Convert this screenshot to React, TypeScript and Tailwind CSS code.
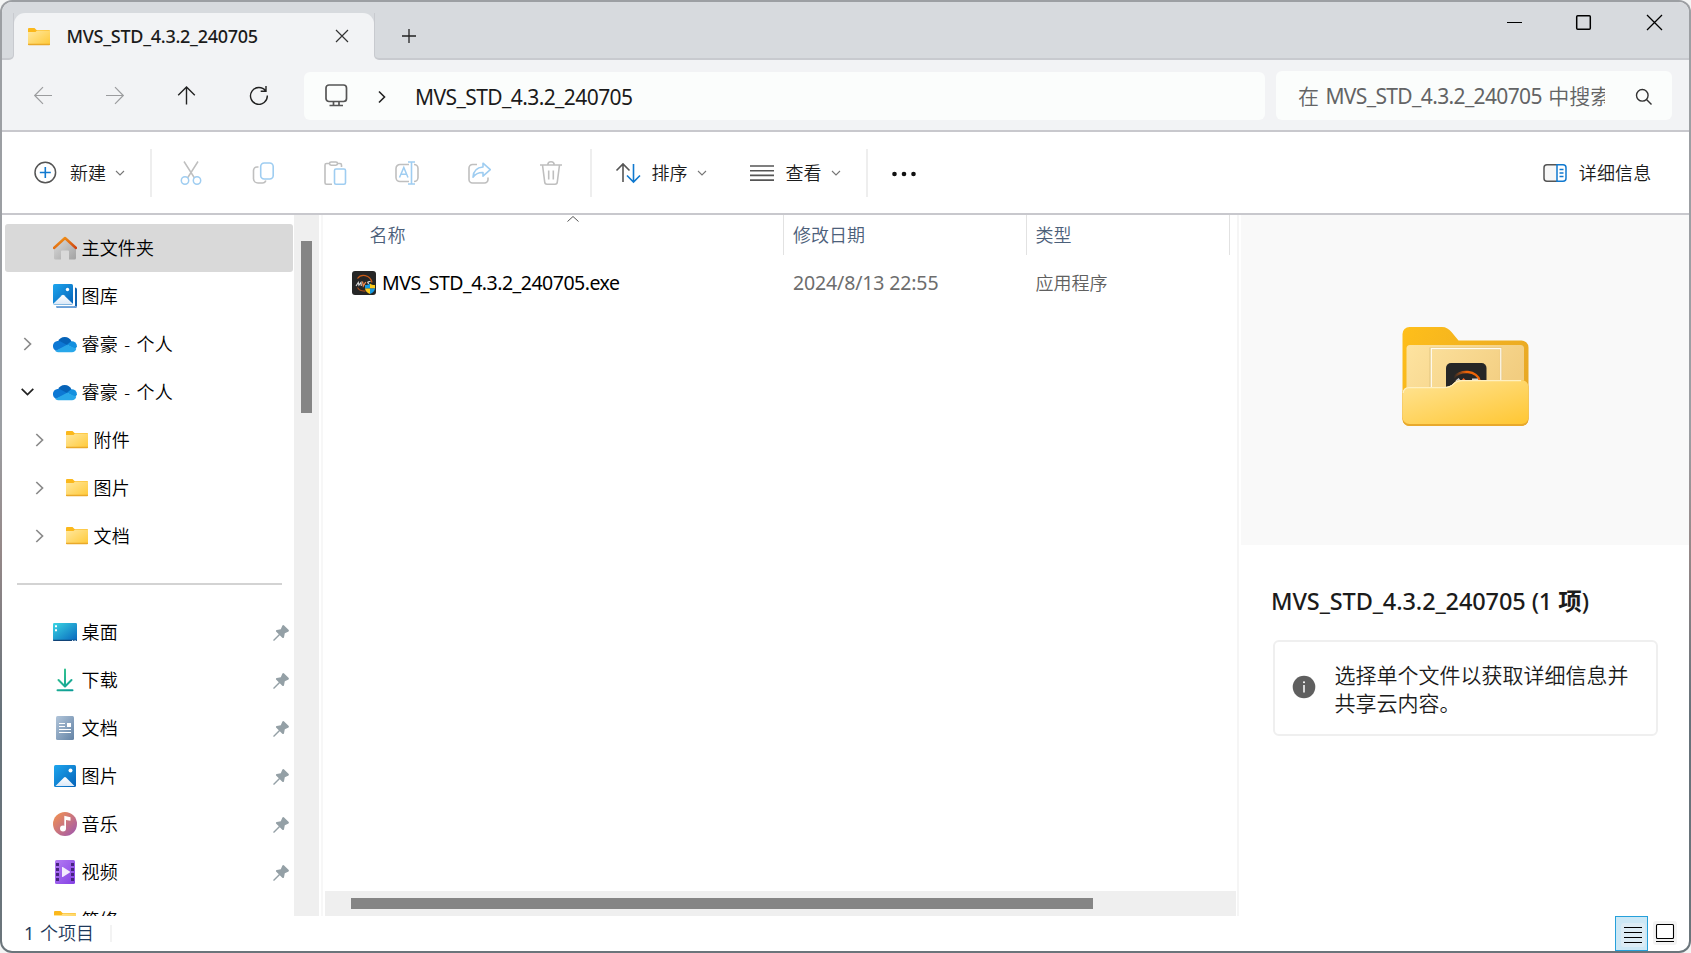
import type { ReactNode } from "react";

function FolderIcon() {
  return (
    <svg width="24" height="24" viewBox="0 0 24 24" className="shrink-0">
      <defs>
        <linearGradient id="fold" x1="0" y1="0" x2="1" y2="1">
          <stop offset="0" stopColor="#ffe8a0" />
          <stop offset="1" stopColor="#ffc937" />
        </linearGradient>
      </defs>
      <path d="M1 4a1 1 0 0 1 1-1h5.500l2 2H22a1 1 0 0 1 1 1v2H1z" fill="#fbb81c" />
      <path d="M1 7h7.500l1.500-1.500H23V20H1z" fill="url(#fold)" />
      <path d="M1 18.800h22v.7a.8.8 0 0 1-.8.8H1.800a.8.800 0 0 1-.8-.8z" fill="#e9a92a" />
    </svg>
  );
}

function HomeIcon() {
  return (
    <svg width="24" height="24" viewBox="0 0 24 24" className="shrink-0">
      <defs>
        <linearGradient id="homeWall" x1="0" y1="0" x2="1" y2="1">
          <stop offset="0" stopColor="#dcdcdc" />
          <stop offset="1" stopColor="#a2a2a2" />
        </linearGradient>
        <linearGradient id="homeRoof" x1="0" y1="0" x2="1" y2="1">
          <stop offset="0" stopColor="#f6a01a" />
          <stop offset="1" stopColor="#cf4310" />
        </linearGradient>
      </defs>
      <path d="M1 11.500 12 2l11 9.500V22a1.500 1.500 0 0 1-1.500 1.500H16V15.500a1 1 0 0 0-1-1H9a1 1 0 0 0-1 1v8H2.500A1.500 1.500 0 0 1 1 22z" fill="url(#homeWall)" />
      <path d="M1 12 12 2l11 10" fill="none" stroke="url(#homeRoof)" strokeWidth="2.500" strokeLinecap="round" strokeLinejoin="round" />
    </svg>
  );
}

function BlueDefs({ id }: { id: string }) {
  return (
    <defs>
      <linearGradient id={id} x1="0" y1="0" x2="1" y2="1">
        <stop offset="0" stopColor="#1ea6ee" />
        <stop offset="1" stopColor="#0562b8" />
      </linearGradient>
      <linearGradient id={id + "m"} x1="0" y1="0" x2="0" y2="1">
        <stop offset="0" stopColor="#ffffff" />
        <stop offset="1" stopColor="#dbe9f8" />
      </linearGradient>
    </defs>
  );
}

function GalleryIcon() {
  return (
    <svg width="24" height="24" viewBox="0 0 24 24" className="shrink-0">
      <BlueDefs id="gal" />
      <path d="M22 3.500a2 2 0 0 1 2 2V22a2 2 0 0 1-2 2H5a2 2 0 0 1-2-1.500h18a1 1 0 0 0 1-1z" fill="#0f62b0" />
      <path d="M3 22.500h18a1 1 0 0 0 .8-.5L24 22a2 2 0 0 1-2 2H5a2 2 0 0 1-2-1.500" fill="#6ba0da" />
      <rect width="20" height="20.500" rx="1.500" fill="url(#gal)" />
      <path d="M0 20 9 11.300a1.500 1.500 0 0 1 2 0L20 20z" fill="url(#galm)" />
      <circle cx="14.500" cy="5.500" r="1.700" fill="#fff" />
    </svg>
  );
}

function PicturesIcon() {
  return (
    <svg width="24" height="24" viewBox="0 0 24 24" className="shrink-0">
      <BlueDefs id="pic" />
      <rect x="1" y="1" width="22" height="22" rx="1.500" fill="url(#pic)" />
      <path d="M2.500 22 11 13.500a1.400 1.400 0 0 1 2 0L21.500 22z" fill="url(#picm)" />
      <circle cx="17.500" cy="6.500" r="2" fill="#fff" />
    </svg>
  );
}

function CloudIcon() {
  return (
    <svg width="24" height="24" viewBox="0 0 24 24" className="shrink-0">
      <path d="M5 9.500a7.300 7.300 0 0 1 13.500 0l-4 5z" fill="#0663b8" />
      <path d="M0 15A5.300 5.300 0 0 1 7 9.200l8 4.300L3 19a4.800 4.800 0 0 1-3-4" fill="#0d78d4" />
      <path d="M14 12.800 18.300 9.200A5.300 5.300 0 0 1 24 14.500l-2 3z" fill="#1490df" />
      <path d="M2.300 19 14 12.800l9.300 4a4.700 4.700 0 0 1-4.300 3.400H5.500A5 5 0 0 1 2.300 19" fill="#28a7ea" />
    </svg>
  );
}

function DesktopIcon() {
  return (
    <svg width="24" height="24" viewBox="0 0 24 24" className="shrink-0">
      <defs>
        <linearGradient id="desk" x1="0" y1="0" x2="1" y2="1">
          <stop offset="0" stopColor="#3ad5e3" />
          <stop offset="1" stopColor="#0765bd" />
        </linearGradient>
      </defs>
      <rect y="3" width="24" height="18" rx="1.200" fill="url(#desk)" />
      <path d="M0 19.700h24v.3a1 1 0 0 1-1 1H1a1 1 0 0 1-1-1z" fill="#114377" />
      <path d="M2 5.200h2v2H2zM2 9.200h2v2H2z" fill="#fff" />
      <path d="M19 20h1.200v1H19zM21.500 20h1.200v1h-1.200z" fill="#cfe3f5" />
    </svg>
  );
}

function DownloadIcon() {
  return (
    <svg width="24" height="24" viewBox="0 0 24 24" className="shrink-0">
      <defs>
        <linearGradient id="down" gradientUnits="userSpaceOnUse" x1="4" y1="1" x2="20" y2="23">
          <stop offset="0" stopColor="#3dcb90" />
          <stop offset="1" stopColor="#089a96" />
        </linearGradient>
      </defs>
      <path d="M12 1.500v16.500M5.500 12l6.500 6.500 6.500-6.500M4.500 22.300h15" fill="none" stroke="url(#down)" strokeWidth="2" strokeLinecap="round" strokeLinejoin="round" />
    </svg>
  );
}

function DocumentIcon() {
  return (
    <svg width="24" height="24" viewBox="0 0 24 24" className="shrink-0">
      <defs>
        <linearGradient id="doc" x1="0" y1="0" x2="1" y2="1">
          <stop offset="0" stopColor="#b1c5da" />
          <stop offset="1" stopColor="#6483a5" />
        </linearGradient>
      </defs>
      <rect x="3" width="18" height="24" rx="1.500" fill="url(#doc)" />
      <path d="M6 7.500h6M6 10.500h6M6 13.500h12M6 16.500h12" stroke="#fff" strokeWidth="1.100" />
      <path d="M14 7h4v4h-4z" fill="#fff" />
    </svg>
  );
}

function MusicIcon() {
  return (
    <svg width="24" height="24" viewBox="0 0 24 24" className="shrink-0">
      <defs>
        <linearGradient id="mus" x1="0.100" y1="0.100" x2="0.900" y2="0.900">
          <stop offset="0" stopColor="#ee8e55" />
          <stop offset="1" stopColor="#a55ba8" />
        </linearGradient>
      </defs>
      <circle cx="12" cy="12" r="12" fill="url(#mus)" />
      <circle cx="10" cy="16.500" r="3" fill="#fff" />
      <path d="M11.300 4.500a.6.600 0 0 1 .8-.6l5.400 1.400v3.400l-4.500-.8v8.600h-1.700z" fill="#fff" />
    </svg>
  );
}

function VideoIcon() {
  return (
    <svg width="24" height="24" viewBox="0 0 24 24" className="shrink-0">
      <defs>
        <linearGradient id="vid" x1="0" y1="0" x2="1" y2="1">
          <stop offset="0" stopColor="#b37bf3" />
          <stop offset="1" stopColor="#8440e4" />
        </linearGradient>
      </defs>
      <rect x="2" width="20" height="24" rx="1.500" fill="url(#vid)" />
      <path d="M3 3h3v3H3zM3 8h3v3H3zM3 13h3v3H3zM3 18h3v3H3zM18 3h3v3h-3zM18 8h3v3h-3zM18 13h3v3h-3zM18 18h3v3h-3z" fill="#472480" />
      <path d="M9 7.500a.5.500 0 0 1 .8-.4l7 4.500a.5.500 0 0 1 0 .8l-7 4.500a.5.500 0 0 1-.8-.4z" fill="#f2eafd" />
    </svg>
  );
}

function PinIcon() {
  return (
    <svg width="16" height="16" viewBox="0 0 16 16" className="shrink-0">
      <path d="M9.400.600a1.300 1.300 0 0 1 1.700-.2l4.400 4.300c.7.800.5 1.700-.4 2L11.800 8.200l-.8 4c-.2.900-1.100 1.100-1.700.5L6.800 10.200 1.300 15.700H.300v-1L5.800 9.200 3.300 6.700c-.7-.7-.4-1.500.5-1.700l4-.8z" fill="#94a0a6" />
    </svg>
  );
}

function Chevron({ open = false }: { open?: boolean }) {
  return open ? (
    <svg width="14" height="14" viewBox="0 0 14 14" className="shrink-0">
      <path d="M.700 3.800 6.500 9.600l5.800-5.800" fill="none" stroke="#222" strokeWidth="1.700" />
    </svg>
  ) : (
    <svg width="14" height="14" viewBox="0 0 14 14" className="shrink-0">
      <path d="M3.300 1l6.200 6-6.200 6" fill="none" stroke="#8a8a8a" strokeWidth="1.700" />
    </svg>
  );
}

function SmallCaret() {
  return (
    <svg width="10" height="8" viewBox="0 0 10 8" className="shrink-0">
      <path d="M1 2l4 4 4-4" fill="none" stroke="#777" strokeWidth="1.100" />
    </svg>
  );
}

function AppIcon() {
  return (
    <svg width="24" height="24" viewBox="0 0 24 24" className="shrink-0">
      <rect width="24" height="24" rx="3" fill="#262626" />
      <path d="M5.500 7.500C9 2.500 18 3.500 20 11.500" fill="none" stroke="#c85a17" strokeWidth="1.300" />
      <path d="M5.500 16.500c1.500 2.500 4.500 3.800 8 3.500" fill="none" stroke="#a84d1a" strokeWidth="1.200" />
      <path d="M4 15l2.300-3.500.6 2.700 2.100-2.700.3 3.500" fill="none" stroke="#d8d8d8" strokeWidth="1.100" />
      <path d="m10.500 10.500.8 4.500 2.500-4" fill="none" stroke="#f08a50" strokeWidth="1.300" />
      <path d="M18.500 10.500c-3-.2-3.700 1.200-1.500 2" fill="none" stroke="#ddd" strokeWidth="1.100" />
      <path d="M18 12.500v5h-5v-3.400c2 0 3.800-.6 5-1.600" fill="#169be0" />
      <path d="M18 12.500c1.200 1 3 1.600 5 1.600v3.400h-5z" fill="#fccb1c" />
      <path d="M13 17.500h5V23c-3-1.200-4.700-3-5-5.500" fill="#fccb1c" />
      <path d="M18 17.500h5c-.3 2.500-2 4.300-5 5.500z" fill="#169be0" />
    </svg>
  );
}

function BigFolder() {
  return (
    <svg width="127" height="99" viewBox="0 0 127 99">
      <defs>
        <linearGradient id="bfBack" x1="0" y1="0" x2="1" y2="0.500">
          <stop offset="0" stopColor="#ffbf1a" />
          <stop offset="1" stopColor="#e8a825" />
        </linearGradient>
        <linearGradient id="bfIn" x1="0" y1="0" x2="1" y2="0.400">
          <stop offset="0" stopColor="#fde3a0" />
          <stop offset="1" stopColor="#f2cd80" />
        </linearGradient>
        <linearGradient id="bfFront" x1="0.100" y1="0" x2="0.900" y2="1">
          <stop offset="0" stopColor="#ffe392" />
          <stop offset="1" stopColor="#ffc837" />
        </linearGradient>
        <linearGradient id="bfArc" x1="0" y1="0" x2="1" y2="0">
          <stop offset="0" stopColor="#262626" />
          <stop offset="0.500" stopColor="#ee6408" />
        </linearGradient>
      </defs>
      <path d="M.500 7a7 7 0 0 1 7-7H40c4 0 7 2 9.500 5l7 8.500h63a7 7 0 0 1 7 7V92a7 7 0 0 1-7 7H7.500a7 7 0 0 1-7-7z" fill="url(#bfBack)" />
      <rect x="4.500" y="18" width="117.500" height="60" rx="3.500" fill="url(#bfIn)" />
      <path d="M28.500 62V21.500h70.500V60" fill="none" stroke="#d9bc78" strokeWidth="2.200" opacity="0.600" />
      <path d="M29.300 62V21.700h69.500V60" fill="none" stroke="#fffdf5" strokeWidth="1.200" />
      <rect x="44" y="36" width="40.500" height="36" rx="5" fill="#262626" />
      <path d="M51.500 51a13.500 9.500 0 0 1 26 2.500" fill="none" stroke="url(#bfArc)" strokeWidth="2.400" />
      <path d="M54 54l2.500-2 1.500 2M70 52.300h6" fill="none" stroke="#cfcfcf" strokeWidth="1.500" />
      <path d="M59.500 53.500 61.500 51l2.500 2.500z" fill="#f4682a" />
      <path d="M.500 66a6 6 0 0 1 6-6H42c5 0 7-1 10-4s5-3 8-3h59.500a7 7 0 0 1 7 7v32a7 7 0 0 1-7 7H7.500a7 7 0 0 1-7-7z" fill="#e8a92d" />
      <path d="M.500 66a6 6 0 0 1 6-6H42c5 0 7-1 10-4s5-3 8-3h59.500a7 7 0 0 1 7 7v30a7 7 0 0 1-7 7H7.500a7 7 0 0 1-7-7z" fill="url(#bfFront)" />
      <path d="M1.200 66a5.500 5.500 0 0 1 5.500-5.400H42c5 0 7-1 10-4s5-3 8-3h59" fill="none" stroke="#fff0c0" strokeWidth="1.200" />
    </svg>
  );
}

type Item = { label: string; icon: ReactNode; chevron?: "open" | "closed"; child?: boolean; active?: boolean };

const tree: Item[] = [
  { label: "主文件夹", icon: <HomeIcon />, active: true },
  { label: "图库", icon: <GalleryIcon /> },
  { label: "睿豪 - 个人", icon: <CloudIcon />, chevron: "closed" },
  { label: "睿豪 - 个人", icon: <CloudIcon />, chevron: "open" },
  { label: "附件", icon: <FolderIcon />, chevron: "closed", child: true },
  { label: "图片", icon: <FolderIcon />, chevron: "closed", child: true },
  { label: "文档", icon: <FolderIcon />, chevron: "closed", child: true },
];

const pinned: Item[] = [
  { label: "桌面", icon: <DesktopIcon /> },
  { label: "下载", icon: <DownloadIcon /> },
  { label: "文档", icon: <DocumentIcon /> },
  { label: "图片", icon: <PicturesIcon /> },
  { label: "音乐", icon: <MusicIcon /> },
  { label: "视频", icon: <VideoIcon /> },
  { label: "简修", icon: <FolderIcon /> },
];

function TreeRow({ item, pin }: { item: Item; pin?: boolean }) {
  return (
    <div className={`ml-[3px] flex h-12 w-[288px] shrink-0 items-center rounded-[3px] ${item.active ? "bg-[#d9d9d9]" : ""}`}>
      <div className={`flex h-12 w-3.5 items-center ${item.child ? "ml-7" : "ml-4"}`}>
        {item.chevron && <Chevron open={item.chevron === "open"} />}
      </div>
      <div className="ml-[18px] flex">{item.icon}</div>
      <span className="ml-[4.500px] text-[18px] leading-6 tracking-[0.15px] [word-spacing:1.6px] whitespace-pre text-black">{item.label}</span>
      {pin && (
        <span className="mt-px mr-[4.500px] ml-auto">
          <PinIcon />
        </span>
      )}
    </div>
  );
}

function TitleBar() {
  return (
    <div className="flex h-[58px] shrink-0 flex-col">
      <div className="h-[11px] bg-[#d7dade]" />
      <div className="flex h-[47px]">
        <div className="flex w-3 bg-[#f2f3f5]">
          <div className="flex-1 rounded-br-[5px] border-r border-b-2 border-[#c8cacf] bg-[#d7dade]" />
        </div>
        <div className="w-[360px] bg-[linear-gradient(#d7dade_50%,#f2f3f5_50%)]">
          <div className="flex h-full items-center rounded-t-[11px] bg-[#f2f3f5]">
            <div className="ml-[13px] flex">
              <FolderIcon />
            </div>
            <span className="ml-[15.500px] text-[18px] font-medium tracking-[-0.26px] text-[#1b1b1b]">MVS_STD_4.3.2_240705</span>
            <svg width="14" height="14" viewBox="0 0 14 14" className="mr-[25px] mb-0.5 ml-auto">
              <path d="M1 1l12 12M13 1 1 13" stroke="#333" strokeWidth="1.200" />
            </svg>
          </div>
        </div>
        <div className="flex flex-1 bg-[#f2f3f5]">
          <div className="flex flex-1 items-start justify-between rounded-bl-[5px] border-b-2 border-l border-[#c8cacf] bg-[#d7dade]">
            <svg width="16" height="16" viewBox="0 0 16 16" className="mt-[15px] ml-[25.500px]">
              <path d="M8 1v14M1 8h14" stroke="#222" strokeWidth="1.300" />
            </svg>
            <div className="mr-[26px] flex">
              <svg width="17" height="17" viewBox="0 0 17 17" className="mt-[1px] mr-[52px]">
                <path d="M1 8.500h15" stroke="#000" />
              </svg>
              <svg width="17" height="17" viewBox="0 0 17 17" className="mt-[1px] mr-[54px]">
                <rect x="1.700" y="1.700" width="13.600" height="13.600" rx="1" fill="none" stroke="#000" strokeWidth="1.500" />
              </svg>
              <svg width="17" height="17" viewBox="0 0 17 17" className="mt-[1px]">
                <path d="M1 1l15 15M16 1 1 16" stroke="#000" strokeWidth="1.300" />
              </svg>
            </div>
          </div>
        </div>
      </div>
    </div>
  );
}

function NavBar() {
  return (
    <div className="flex h-[72px] shrink-0 items-start border-b-2 border-[#c8c8cd] bg-[#f2f3f5]">
      <div className="ml-[31px] flex h-[70px] w-[271px] items-center gap-[52px] pb-px">
        <svg width="20" height="20" viewBox="0 0 20 20" fill="none" stroke="#9b9c9e" strokeWidth="1.200" className="shrink-0">
          <path d="M19 10.500H1.700M10 2.200 1.700 10.500l8.300 8.300" />
        </svg>
        <svg width="20" height="20" viewBox="0 0 20 20" fill="none" stroke="#9b9c9e" strokeWidth="1.200" className="shrink-0">
          <path d="M1 10.500h17.300M10 2.200l8.300 8.300-8.300 8.300" />
        </svg>
        <svg width="20" height="20" viewBox="0 0 20 20" fill="none" stroke="#222" strokeWidth="1.400" className="shrink-0">
          <path d="M9.500 19.500V2M1.200 10.300 9.500 2l8.300 8.300" />
        </svg>
        <svg width="20" height="20" viewBox="0 0 20 20" fill="none" stroke="#222" strokeWidth="1.400" className="shrink-0">
          <path d="M16.700 6A8.400 8.400 0 1 0 18.300 10.500M17 1v5.300h-5.300" />
        </svg>
      </div>
      <div className="mt-3 flex h-12 w-[961px] items-center rounded-md bg-[#fbfdfc]">
        <svg width="24" height="24" viewBox="0 0 24 24" fill="none" stroke="#555" strokeWidth="1.700" className="ml-5 -mt-0.5">
          <rect x="2" y="2" width="20.500" height="16.500" rx="3" />
          <path d="M9.500 18.500v3.500M15 18.500v3.500M5.500 22.500h13.500" />
        </svg>
        <svg width="10" height="14" viewBox="0 0 10 14" fill="none" stroke="#222" strokeWidth="1.600" className="mt-0.5 ml-[28.500px]">
          <path d="M2 1.500 7.500 7 2 12.500" />
        </svg>
        <span className="mt-px ml-[28.500px] text-[21px] leading-7 font-normal tracking-[-0.58px] text-[#1b1b1b]">MVS_STD_4.3.2_240705</span>
      </div>
      <div className="mt-[11px] ml-[11px] flex h-[49px] w-[396px] items-center rounded-md bg-[#fbfdfc]">
        <div className="ml-[22px] w-[307px] overflow-hidden text-[21px] leading-8 whitespace-pre text-[#636465]">
          在<span className="font-normal tracking-[-0.63px] [word-spacing:1.6px]"> MVS_STD_4.3.2_240705 </span>中搜索
        </div>
        <svg width="18" height="18" viewBox="0 0 18 18" fill="none" stroke="#333" strokeWidth="1.400" className="ml-[30px] mt-0.5">
          <circle cx="7.300" cy="7.300" r="5.800" />
          <path d="m11.500 11.500 5 5" />
        </svg>
      </div>
    </div>
  );
}

function Divider() {
  return <div className="h-12 w-0.5 shrink-0 bg-[#eeeeee]" />;
}

const G = "#bfbfbf";
const B = "#9fcdf1";

function Toolbar() {
  return (
    <div className="flex h-[83px] shrink-0 items-center border-b-2 border-[#c8c8cd] bg-white text-[18px] text-[#1b1b1b]">
      <div className="flex w-[148px] items-center">
        <svg width="24" height="24" viewBox="0 0 24 24" fill="none" className="ml-[31px]">
          <circle cx="12.300" cy="11.500" r="10.300" stroke="#555" strokeWidth="1.500" />
          <path d="M12.300 6v11M6.800 11.500h11" stroke="#1079cf" strokeWidth="1.600" />
        </svg>
        <span className="ml-[13px] leading-6">新建</span>
        <span className="ml-[9px] flex">
          <SmallCaret />
        </span>
      </div>
      <Divider />
      <div className="flex w-[438px] items-center gap-12 pl-[27px]">
        <svg width="24" height="24" viewBox="0 0 24 24" fill="none" strokeWidth="1.500" className="shrink-0">
          <path d="M5 0.500 15.500 17M19 0.500 8.500 17" stroke={G} />
          <circle cx="6" cy="19.500" r="3.700" stroke={B} />
          <circle cx="18" cy="19.500" r="3.700" stroke={B} />
        </svg>
        <svg width="24" height="24" viewBox="0 0 24 24" fill="none" strokeWidth="1.600" className="shrink-0">
          <path d="M7.500 6H6A3.500 3.500 0 0 0 2.500 9.500v8.200A4.500 4.500 0 0 0 7 22h4.500a3.500 3.500 0 0 0 3.300-2.500" stroke={G} />
          <rect x="9.700" y="2" width="12.500" height="16" rx="3.500" stroke={B} />
        </svg>
        <svg width="24" height="24" viewBox="0 0 24 24" fill="none" strokeWidth="1.600" className="shrink-0">
          <path d="M9 23.200H3.500A1.500 1.500 0 0 1 2 21.700V4a1.500 1.500 0 0 1 1.500-1.500H7M14 2.500h3A1.500 1.500 0 0 1 18.500 4v2" stroke={G} />
          <rect x="6.500" y="1" width="8" height="3.200" rx="1.600" stroke={G} />
          <rect x="11.500" y="8" width="11" height="15.200" rx="1.500" stroke={B} />
        </svg>
        <svg width="24" height="24" viewBox="0 0 24 24" fill="none" strokeWidth="1.600" className="shrink-0">
          <path d="M14 3.500H5A4 4 0 0 0 1 7.500v9a4 4 0 0 0 4 4h9M19 3.500a4 4 0 0 1 4 4v9a4 4 0 0 1-4 4" stroke={G} />
          <path d="M16.500 1v22M13 1h7M13 23h7" stroke={B} />
          <path d="M4.500 16.500 8.800 6.500l4.200 10M6 13.200h5.600" stroke={B} strokeWidth="1.500" />
        </svg>
        <svg width="24" height="24" viewBox="0 0 24 24" fill="none" strokeWidth="1.600" strokeLinejoin="round" className="shrink-0">
          <path d="M10 3.500H5.500A3.500 3.500 0 0 0 2 7v11.500A3.500 3.500 0 0 0 5.500 22h12a3.500 3.500 0 0 0 3.500-3.500v-2" stroke={G} />
          <path d="M16 2.200 23.300 8.700 16 15.200v-3.700c-4.500-.2-7.500 1.500-10 4.700.3-5.500 3.500-9.700 10-10.200z" stroke={B} />
        </svg>
        <svg width="24" height="24" viewBox="0 0 24 24" fill="none" stroke={G} strokeWidth="1.600" className="shrink-0">
          <path d="M1 4h22M8.800 4a3.200 3.200 0 0 1 6.400 0M3.500 4l2.200 17a2.300 2.300 0 0 0 2.300 2.200h8a2.300 2.300 0 0 0 2.300-2.200L20.500 4M9.700 9.500v9M14.300 9.500v9" />
        </svg>
      </div>
      <Divider />
      <div className="flex w-[274px] items-center">
        <svg width="26" height="22" viewBox="0 0 26 22" fill="none" strokeWidth="1.600" className="ml-[23px] shrink-0">
          <path d="M8 20V2M1.500 8.500 8 2l6.500 6.500" stroke="#555" />
          <path d="M18.500 2v18M12 13.500l6.500 6.500 6.500-6.500" stroke="#1079cf" />
        </svg>
        <span className="ml-[10.500px] leading-6">排序</span>
        <span className="ml-[9.500px] flex">
          <SmallCaret />
        </span>
        <svg width="24" height="18" viewBox="0 0 24 18" stroke="#555" strokeWidth="1.600" className="ml-[43px] shrink-0">
          <path d="M0 2h24M0 6.700h24M0 11.400h24M0 16.100h24" />
        </svg>
        <span className="ml-[11.500px] leading-6">查看</span>
        <span className="ml-[9.500px] flex">
          <SmallCaret />
        </span>
      </div>
      <Divider />
      <svg width="26" height="6" viewBox="0 0 26 6" fill="#111" className="mt-0.5 ml-[23px]">
        <circle cx="3.500" cy="3" r="2.300" />
        <circle cx="13" cy="3" r="2.300" />
        <circle cx="22.500" cy="3" r="2.300" />
      </svg>
      <svg width="24" height="20" viewBox="0 0 24 20" fill="none" strokeWidth="1.500" className="ml-auto">
        <path d="M14 1.800H4A3 3 0 0 0 1 4.800v10.400a3 3 0 0 0 3 3h10" stroke="#555" fill="#f7f7f7" />
        <path d="M14 1.800h6a3 3 0 0 1 3 3v10.400a3 3 0 0 1-3 3h-6z" stroke="#1079cf" fill="#fff" />
        <path d="M16.500 6.500h4M16.500 10h4M16.500 13.500h4" stroke="#1079cf" />
      </svg>
      <span className="mr-[37.500px] ml-[11.500px] leading-6 tracking-[0.2px]">详细信息</span>
    </div>
  );
}

function Sidebar() {
  return (
    <div className="flex w-[321px] shrink-0">
      <div className="flex w-[292px] flex-col overflow-hidden pt-[9px]">
        {tree.map((t, i) => (
          <TreeRow key={i} item={t} />
        ))}
        <div className="flex h-12 shrink-0 items-center">
          <div className="ml-[15px] h-0.5 w-[265px] bg-[#d3d3d3]" />
        </div>
        {pinned.map((t, i) => (
          <TreeRow key={i} item={t} pin={i < 6} />
        ))}
      </div>
      <div className="w-[25px] bg-[#efefef] pt-[26px] pl-[7px]">
        <div className="h-[172px] w-[11px] bg-[#858585]" />
      </div>
      <div className="ml-0.5 w-0.5 bg-[#f7f7f7]" />
    </div>
  );
}

function FileList() {
  return (
    <div className="flex w-[914px] shrink-0 flex-col">
      <div className="flex h-10 text-[18px] leading-[41px] text-[#4c607a]">
        <div className="flex w-[461px] justify-between border-r border-[#e2e2e2] pl-[46.500px]">
          <span>名称</span>
          <svg width="12" height="8" viewBox="0 0 12 8" fill="none" stroke="#555" className="mr-[204.500px]">
            <path d="M.500 6.500 6 1.500l5.500 5" />
          </svg>
        </div>
        <div className="w-[243px] border-r border-[#e2e2e2] pl-[9px]">修改日期</div>
        <div className="w-[203px] border-r border-[#e2e2e2] pl-[8.500px]">类型</div>
      </div>
      <div className="mt-1 flex h-12 items-center">
        <div className="flex w-[470px] items-center pl-[29px]">
          <AppIcon />
          <span className="ml-1.5 text-[19.500px] leading-6 font-normal tracking-[-0.5px] text-black">MVS_STD_4.3.2_240705.exe</span>
        </div>
        <span className="w-[242.500px] text-[19.500px] leading-6 font-normal tracking-[-0.14px] text-[#6d6d6d]">2024/8/13 22:55</span>
        <span className="text-[18px] leading-6 text-[#606060]">应用程序</span>
      </div>
      <div className="mt-auto ml-0.5 h-[25px] w-[911px] bg-[#efefef] pt-[7px] pl-[26px]">
        <div className="h-[11px] w-[742px] bg-[#858585]" />
      </div>
    </div>
  );
}

function DetailsPane() {
  return (
    <div className="flex flex-1 border-l-2 border-[#f5f5f5]">
      <div className="ml-0.5 flex flex-1 flex-col">
        <div className="h-[330px] bg-[#f9f9f9] pt-[112px] pl-[161px]">
          <BigFolder />
        </div>
        <div className="mt-10 ml-[30px] text-[23.500px] leading-8 font-medium whitespace-pre text-[#1b1b1b]">
          <span className="tracking-[-0.1px]">MVS_STD_4.3.2_240705 (1 </span>
          <span className="font-bold">项</span>)
        </div>
        <div className="mt-[23px] ml-8 flex h-24 w-[385px] items-center rounded-md border-2 border-[#efefef]">
          <svg width="24" height="24" viewBox="0 0 24 24" className="mb-0.5 ml-[17px]">
            <circle cx="12" cy="12" r="11.300" fill="#5f5f5f" />
            <path d="M12 10v7.500" stroke="#fff" strokeWidth="1.500" />
            <circle cx="12" cy="7.300" r="1" fill="#fff" />
          </svg>
          <p className="mt-px ml-[18.500px] w-[300px] text-[21px] leading-7 text-[#1b1b1b]">
            选择单个文件以获取详细信息并
            <br />
            共享云内容。
          </p>
        </div>
      </div>
    </div>
  );
}

function StatusBar() {
  return (
    <div className="flex h-[35px] shrink-0 items-start">
      <span className="mt-[5px] ml-[22px] w-[86px] text-[18px] leading-6 [word-spacing:1px] whitespace-pre text-[#1e395b]">
        <span className="font-normal">1</span> 个项目
      </span>
      <div className="mt-[9px] h-[17px] w-0.5 bg-[#f3f3f3]" />
      <div className="ml-auto flex h-[35px] w-[33px] items-center justify-center border border-[#26a0da] bg-[#cce8f6] pl-0.5">
        <svg width="24" height="24" viewBox="0 0 24 24" className="mt-0.5">
          <rect width="24" height="24" rx="3" fill="#dcecf5" />
          <path d="M3 4.500h18M3 9.500h18M3 14.500h18M3 19.500h18" stroke="#000" strokeWidth="1.100" />
        </svg>
      </div>
      <svg width="24" height="24" viewBox="0 0 24 24" className="mt-[5px] mr-3 ml-[5px]">
        <rect width="24" height="24" rx="3" fill="#f3f3f3" />
        <rect x="3.500" y="3.500" width="17" height="14" rx="1" fill="#fff" stroke="#000" strokeWidth="1.100" />
        <path d="M3 20.500h18" stroke="#000" strokeWidth="1.100" />
      </svg>
    </div>
  );
}

export default function App() {
  return (
    <div className="h-[953px] w-[1691px] overflow-hidden bg-[#f4f5f5] font-['Noto_Sans','Noto_Sans_CJK_SC',sans-serif] font-[350]">
      <div className="h-full w-full rounded-xl bg-[linear-gradient(#9c9fa3_45%,#958888_58%,#66727a_75%,#6b757b)] p-0.5">
        <div className="flex h-full w-full flex-col overflow-hidden rounded-[10px] bg-white">
          <TitleBar />
          <NavBar />
          <Toolbar />
          <div className="flex h-[701px] shrink-0">
            <Sidebar />
            <FileList />
            <DetailsPane />
          </div>
          <StatusBar />
        </div>
      </div>
    </div>
  );
}
